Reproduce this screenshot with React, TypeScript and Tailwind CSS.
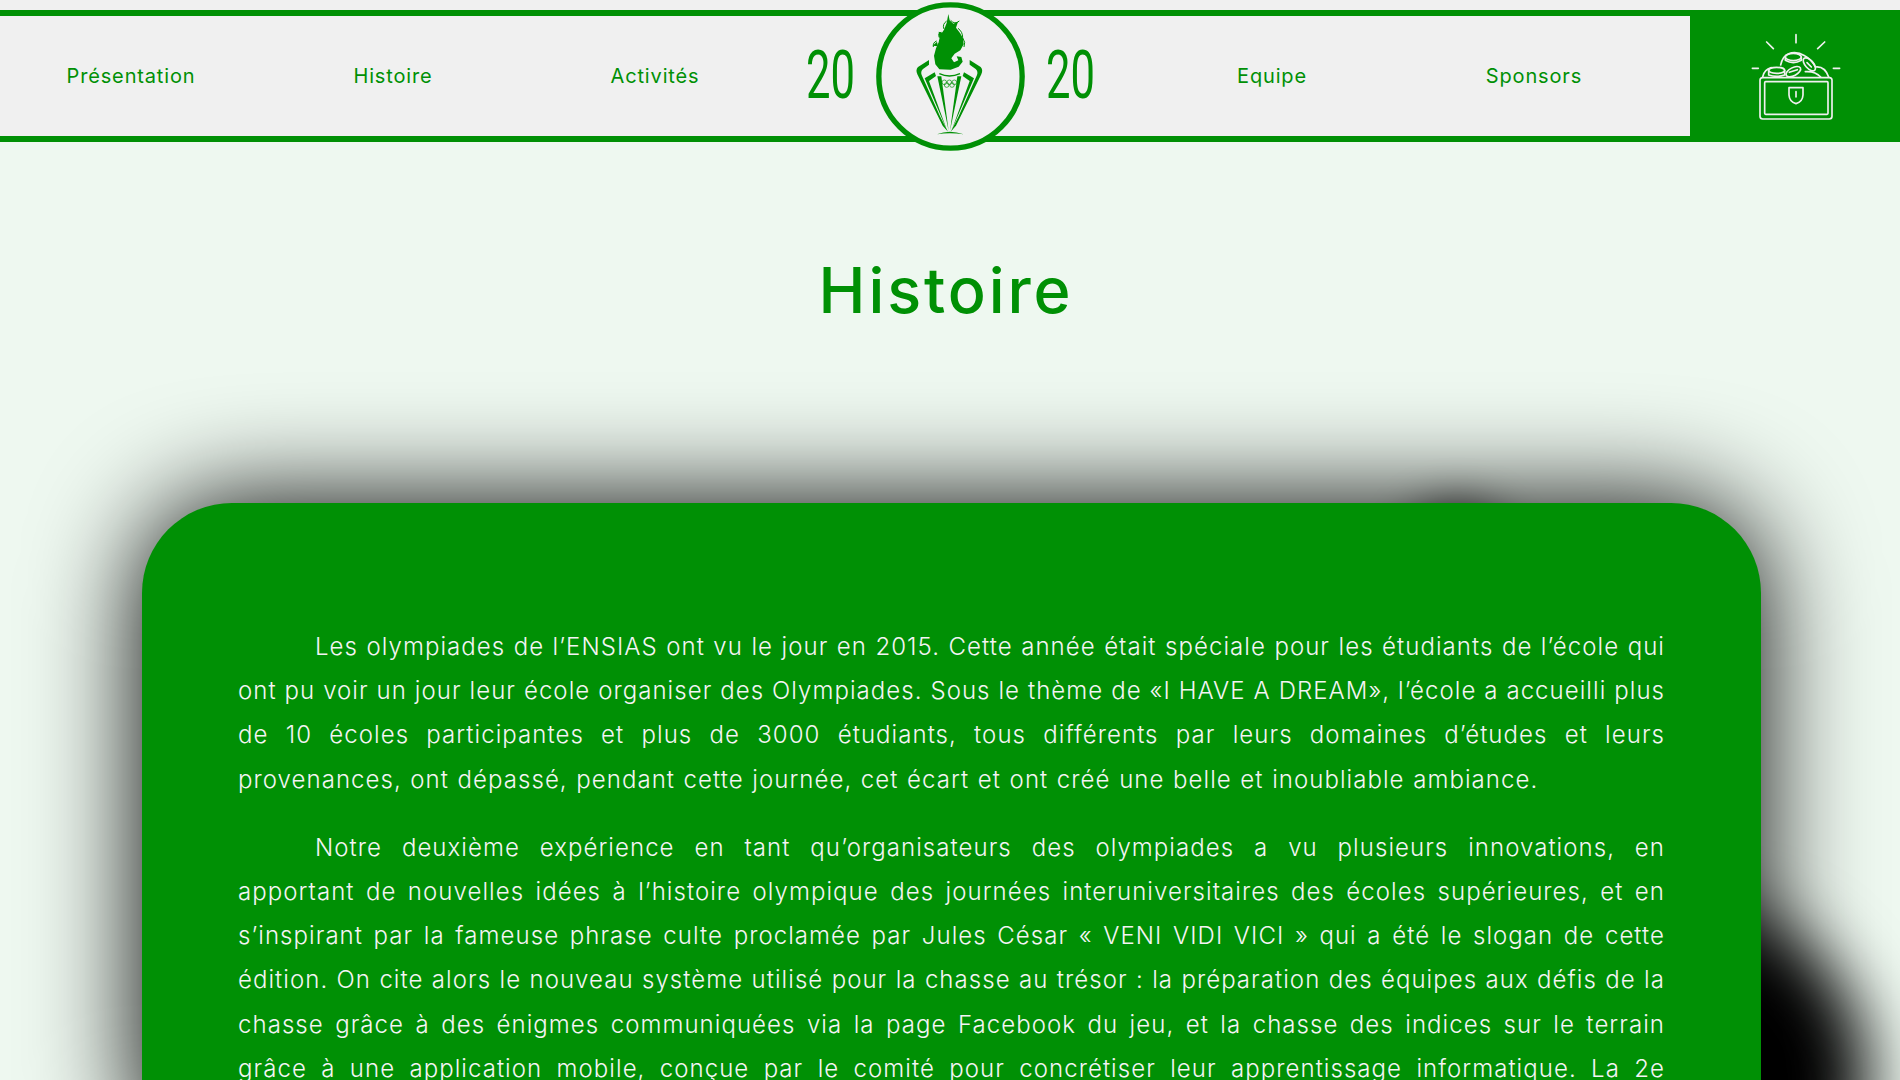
const firstParagraph = [
  "Les olympiades de l’ENSIAS ont vu le jour en 2015. Cette année était spéciale pour les étudiants de l’école qui",
  "ont pu voir un jour leur école organiser des Olympiades. Sous le thème de «I HAVE A DREAM», l’école a accueilli plus",
  "de 10 écoles participantes et plus de 3000 étudiants, tous différents par leurs domaines d’études et leurs",
  "provenances, ont dépassé, pendant cette journée, cet écart et ont créé une belle et inoubliable ambiance.",
];

const secondParagraph = [
  "Notre deuxième expérience en tant qu’organisateurs des olympiades a vu plusieurs innovations, en",
  "apportant de nouvelles idées à l’histoire olympique des journées interuniversitaires des écoles supérieures, et en",
  "s’inspirant par la fameuse phrase culte proclamée par Jules César « VENI VIDI VICI » qui a été le slogan de cette",
  "édition. On cite alors le nouveau système utilisé pour la chasse au trésor : la préparation des équipes aux défis de la",
  "chasse grâce à des énigmes communiquées via la page Facebook du jeu, et la chasse des indices sur le terrain",
  "grâce à une application mobile, conçue par le comité pour concrétiser leur apprentissage informatique. La 2e",
];

function NavItem({ label }: { label: string }) {
  return (
    <a className="w-[262px] shrink-0 text-center text-[20px] tracking-[0.85px] text-[#009005]">
      {label}
    </a>
  );
}

function Year() {
  return (
    <span className="w-[45px] shrink-0 flex justify-center text-[66px] leading-none font-normal text-[#009005] [font-family:Roboto,sans-serif] scale-x-[0.66]">
      20
    </span>
  );
}

function TorchLogo() {
  return (
    <svg
      viewBox="-12 3 447 447"
      className="relative z-10 w-[149px] h-[149px] shrink-0"
    >
      <circle cx="211.5" cy="226.5" r="215" fill="#f0f0f0" stroke="#009005" strokeWidth="16" />
      <g fill="#009005">
        {/* flamme */}
        <path d="M205 39 L209 58 L220 68 L234 62 L228 80 L240 96 L249 112 L251 130 L241 148 L224 158 L214 172 L222 184 L235 178 L230 166 L244 168 L248 182 L236 197 L212 206 L178 205 L166 190 L162 164 L168 142 L176 124 L180 104 L192 86 L200 66 Z" />
        <path d="M171 122 L158 134 L174 136 Z M176 92 L190 96 L178 110 Z" />
        {/* bras */}
        <path d="M147 177 L114 198 Q106 206 112 220 L188 374 L204 392 L180 346 L125 222 Q121 211 129 204 L147 191 Z" />
        <path d="M269 177 L302 198 Q310 206 304 220 L228 374 L212 392 L236 346 L291 222 Q295 211 287 204 L269 191 Z" />
        <path d="M134 232 L164 214 L168 225 L147 240 L201 388 Z" />
        <path d="M282 232 L252 214 L248 225 L269 240 L215 388 Z" />
        <path d="M172 226 L184 226 L206 390 Z" />
        <path d="M244 226 L232 226 L210 390 Z" />
        <path d="M171 400 Q208 384 251 400 Q208 393 171 400 Z" />
      </g>
      <g fill="none" stroke="#009005" strokeWidth="2">
        {/* volutes de la flamme */}
        <path d="M200 60 Q186 70 192 84 M184 94 Q172 96 178 110 M170 120 Q158 124 160 138 M212 58 Q224 72 238 60 M234 82 Q248 92 248 110 Q258 124 252 138" strokeWidth="3" />
        <path d="M178 218 Q208 232 240 218" strokeWidth="4" />
        <circle cx="193" cy="244" r="7" />
        <circle cx="208" cy="244" r="7" />
        <circle cx="223" cy="244" r="7" />
        <circle cx="200" cy="252" r="7" />
        <circle cx="216" cy="252" r="7" />
      </g>
    </svg>
  );
}

function TreasureIcon() {
  return (
    <svg
      viewBox="0 0 330 330"
      className="w-[110px] h-[110px]"
      fill="none"
      stroke="#f0f0f0"
      strokeWidth="5"
      strokeLinecap="round"
      strokeLinejoin="round"
    >
      <path d="M168 41 V65 M80 63 L100 83 M254 63 L233 83 M37 142 H55 M280 142 H299" />
      <rect x="60" y="170" width="216" height="124" rx="8" />
      <rect x="74" y="182" width="190" height="98" rx="3" />
      <path d="M147 200 H189 V222 Q188 242 168 248 Q148 242 147 222 Z M168 212 V228" />
      {/* pièces */}
      <path d="M68 168 Q72 146 94 140 M122 132 Q128 104 146 98 Q170 90 194 104 Q216 116 226 138 Q254 134 266 168" />
      <ellipse cx="160" cy="108" rx="24" ry="11" />
      <path d="M136 108 V118 Q160 132 184 118 V108" />
      <ellipse cx="110" cy="148" rx="24" ry="9" />
      <path d="M86 148 V162 Q110 170 134 162 V148" />
      <ellipse cx="160" cy="152" rx="24" ry="12" transform="rotate(-28 160 152)" />
      <path d="M148 154 L172 146" />
      <ellipse cx="208" cy="130" rx="24" ry="12" transform="rotate(48 208 130)" />
      <path d="M201 125 L214 138" />
      <path d="M196 152 Q226 150 242 168" />
    </svg>
  );
}

export default function App() {
  return (
    <div className="relative h-screen overflow-hidden bg-[#eef8f0] [font-family:Inter,sans-serif]">
      <div className="bg-[#f0f0f0] pt-2.5">
        <header className="relative flex items-center h-[132px] border-y-[6px] border-[#009005] bg-[#f0f0f0]">
          <NavItem label="Présentation" />
          <NavItem label="Histoire" />
          <NavItem label="Activités" />
          <div className="w-[355px] shrink-0 flex items-center gap-[23px] pl-[22px]">
            <Year />
            <TorchLogo />
            <Year />
          </div>
          <NavItem label="Equipe" />
          <NavItem label="Sponsors" />
          <div className="ml-auto -my-[6px] w-[210px] h-[132px] bg-[#009005] flex items-center justify-center">
            <TreasureIcon />
          </div>
        </header>
      </div>

      <main className="relative pt-[99px]">
        <h1 className="h-[99px] pr-2 text-center text-[63px] leading-[99px] font-medium tracking-[2.9px] text-[#009005]">
          Histoire
        </h1>

        {/* Ombres derrière la carte */}
        <div className="absolute left-[1397px] top-[358px] w-[120px] h-[120px] rounded-full bg-black blur-[20px] opacity-50" />
        <div className="absolute left-[1532px] top-[770px] w-[336px] h-[336px] rounded-full bg-black blur-[34px]" />

        <section className="relative ml-[142px] mr-[139px] mt-[163px] rounded-[90px] bg-[#009005] px-[96px] pt-[122px] pb-20 text-[24px] leading-[44.2px] font-light tracking-[1.05px] text-[#f4f4f4] shadow-[0_0_110px_#000]">
          <p>
            {firstParagraph.map((line, i) => (
              <span
                key={line}
                className={
                  i === 0
                    ? "block whitespace-nowrap pl-[77px] [text-align:justify] [text-align-last:justify]"
                    : i === 3
                      ? "block whitespace-nowrap [word-spacing:0.8px]"
                      : "block whitespace-nowrap [text-align:justify] [text-align-last:justify]"
                }
              >
                {line}
              </span>
            ))}
          </p>
          <p className="mt-[24px]">
            {secondParagraph.map((line, i) => (
              <span
                key={line}
                className={
                  i === 0
                    ? "block whitespace-nowrap pl-[77px] [text-align:justify] [text-align-last:justify]"
                    : "block whitespace-nowrap [text-align:justify] [text-align-last:justify]"
                }
              >
                {line}
              </span>
            ))}
          </p>
        </section>
      </main>
    </div>
  );
}
